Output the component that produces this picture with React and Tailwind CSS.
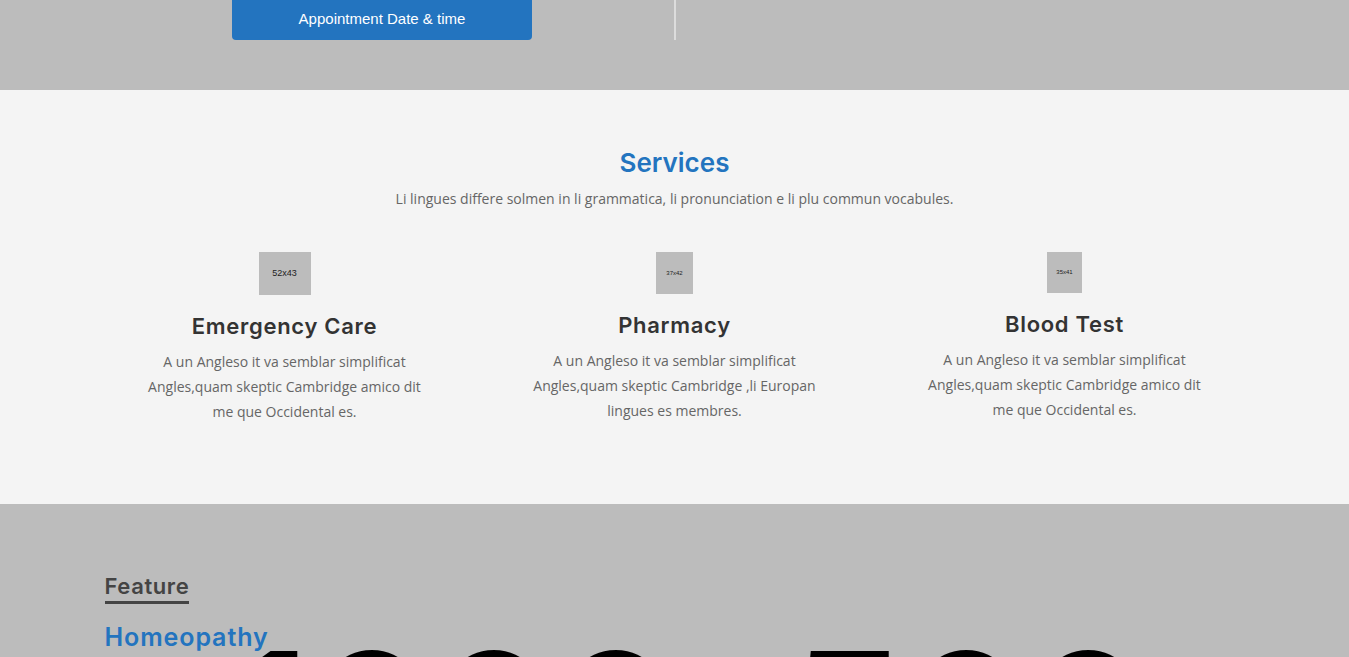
import React from "react";

const heading = { fontFamily: "Inter, 'Noto Sans', sans-serif" };
const body = { fontFamily: "'Open Sans', 'Noto Sans', sans-serif" };

const services = [
    {
        title: "Emergency Care",
        img: "52x43",
        w: "w-[52px]",
        h: "h-[43px]",
        txt: "text-[9px]",
        text: "A un Angleso it va semblar simplificat Angles,quam skeptic Cambridge amico dit me que Occidental es.",
    },
    {
        title: "Pharmacy",
        img: "37x42",
        w: "w-[37px]",
        h: "h-[42px]",
        txt: "text-[6px]",
        text: "A un Angleso it va semblar simplificat Angles,quam skeptic Cambridge ,li Europan lingues es membres.",
    },
    {
        title: "Blood Test",
        img: "35x41",
        w: "w-[35px]",
        h: "h-[41px]",
        txt: "text-[6px]",
        text: "A un Angleso it va semblar simplificat Angles,quam skeptic Cambridge amico dit me que Occidental es.",
    },
];

function ServiceCard({item}) {
    return (
        <div className="flex flex-col items-center px-[15px]">
            <div
                className={`${item.w} ${item.h} bg-[#bcbcbc] flex items-center justify-center text-[#222] ${item.txt}`}
                style={{fontFamily: "'Liberation Sans', Arial, sans-serif"}}
            >
                {item.img}
            </div>
            <h3 className="mt-[16px] text-[22px] leading-[30px] font-semibold tracking-[0.7px] text-[#333]" style={heading}>
                {item.title}
            </h3>
            <p className="mt-[8px] w-[290px] text-center text-[14px] leading-[25px] text-[#666]" style={body}>
                {item.text}
            </p>
        </div>
    );
}

export default function App() {
    return (
        <div className="w-full min-h-screen overflow-hidden bg-[#bcbcbc]">
            {/* booking strip */}
            <div className="h-[90px] bg-[#bcbcbc]">
                <div className="w-[1170px] mx-auto flex">
                    <div className="w-1/2 flex justify-center">
                        <button
                            className="w-[300px] h-10 pb-[1px] bg-[#2374bf] text-white text-[15px] rounded-b-[4px]"
                            style={{fontFamily: "'Liberation Sans', Arial, sans-serif"}}
                        >
                            Appointment Date &amp; time
                        </button>
                    </div>
                    <div className="w-1/2 h-10 -ml-[1px] border-l-2 border-[#dcdcdc]"></div>
                </div>
            </div>

            {/* services */}
            <div className="bg-[#f4f4f4] pt-[57px] pb-[80px]">
                <h2 className="text-center text-[26px] leading-[32px] font-semibold text-[#2374bf]" style={heading}>
                    Services
                </h2>
                <p className="mt-[10px] text-center text-[14px] leading-[20px] text-[#666]" style={body}>
                    Li lingues differe solmen in li grammatica, li pronunciation e li plu commun vocabules.
                </p>
                <div className="w-[1170px] mx-auto mt-[43px] grid grid-cols-3">
                    {services.map((s) => (
                        <ServiceCard key={s.title} item={s}/>
                    ))}
                </div>
            </div>

            {/* feature */}
            <div className="bg-[#bcbcbc] pt-[67px] h-[154px]">
                <div className="w-[1170px] mx-auto px-[15px] relative">
                    <h3 className="inline-block text-[22px] leading-[30px] font-semibold tracking-[0.6px] text-[#444] border-b-[3px] border-[#444]" style={heading}>
                        Feature
                    </h3>
                    <h2 className="mt-[17px] text-[25px] leading-[32px] font-semibold tracking-[0.9px] text-[#2374bf]" style={heading}>
                        Homeopathy
                    </h2>
                    <div className="flex font-semibold text-black text-[185px] leading-none -mt-[26px]" style={heading}>
                        <span className="ml-[128px]">1000</span>
                        <span className="ml-[112px]">500</span>
                    </div>
                </div>
            </div>
        </div>
    );
}
